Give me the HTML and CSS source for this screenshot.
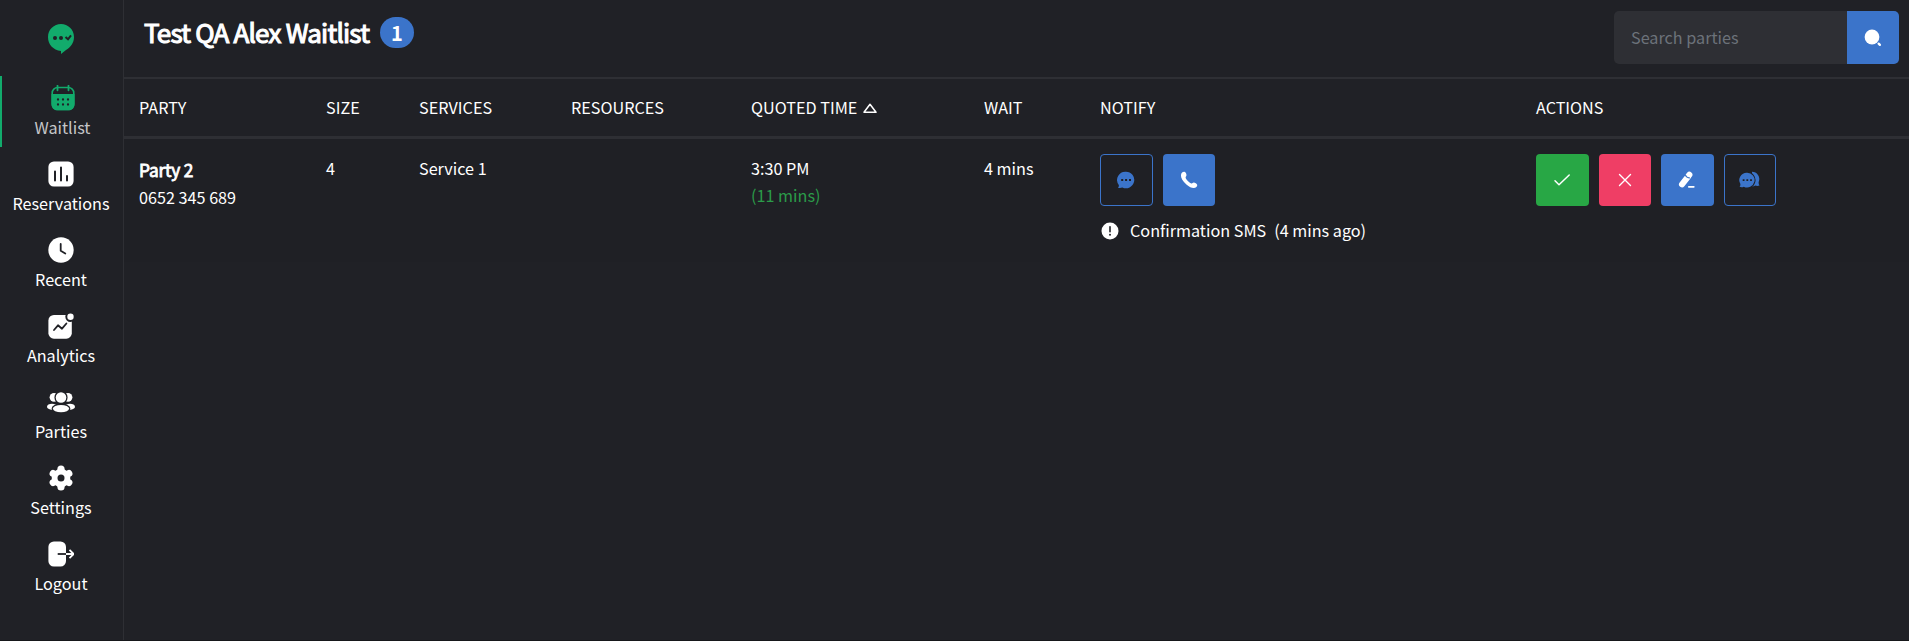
FILE: index.html
```html
<!DOCTYPE html>
<html lang="en">
<head>
<meta charset="utf-8">
<title>Waitlist</title>
<link rel="stylesheet" href="styles.css">
</head>
<body>
<div class="app">
  <nav class="sidebar">
    <a class="logo">
      <svg width="26" height="30" viewBox="0 0 26 30"><path fill="#12ab6c" d="M13 0C20 0 26 5.500 26 13C26 19 22.500 23.500 18 26L13 30V27C5 26 0 20.500 0 13C0 5.500 6 0 13 0Z"/><g fill="#202126"><circle cx="7" cy="14" r="2"/><circle cx="13" cy="14" r="2"/></g><path d="M17.500 13l2.500 2.300 3-4" fill="none" stroke="#202126" stroke-width="2"/></svg>
    </a>
    <a class="nav-item active">
      <svg class="nav-icon" width="26" height="26" viewBox="0 0 26 26"><rect x="2.200" y="2.500" width="21.600" height="22" rx="5.500" fill="none" stroke="#12ab6c" stroke-width="1.600"/><path fill="#12ab6c" d="M1.500 9h23v10c0 4-2.500 6.300-6 6.300h-11c-3.500 0-6-2.300-6-6.300z"/><path d="M7.500 .7v4.600M18.500 .7v4.600" stroke="#12ab6c" stroke-width="1.800" stroke-linecap="round"/><g fill="#202126"><circle cx="8" cy="14.500" r="1.150"/><circle cx="13" cy="14.500" r="1.150"/><circle cx="18" cy="14.500" r="1.150"/><circle cx="8" cy="19.500" r="1.150"/><circle cx="13" cy="19.500" r="1.150"/><circle cx="18" cy="19.500" r="1.150"/></g></svg>
      <span>Waitlist</span>
    </a>
    <a class="nav-item">
      <svg class="nav-icon" width="26" height="26" viewBox="0 0 26 26"><rect x=".4" y=".4" width="25.200" height="25.200" rx="5.500" fill="#fff"/><path d="M7 10.500v9M13 6.500v13M19 15v4.500" stroke="#202126" stroke-width="2" stroke-linecap="round"/></svg>
      <span>Reservations</span>
    </a>
    <a class="nav-item">
      <svg class="nav-icon" width="26" height="26" viewBox="0 0 26 26"><circle cx="13" cy="13" r="12.700" fill="#fff"/><path d="M12.700 7v6.800l4.600 2.700" fill="none" stroke="#202126" stroke-width="1.800" stroke-linecap="round" stroke-linejoin="round"/></svg>
      <span>Recent</span>
    </a>
    <a class="nav-item">
      <svg class="nav-icon" width="26" height="26" viewBox="0 0 26 26"><rect x=".4" y="2" width="23.400" height="23.700" rx="5.500" fill="#fff"/><circle cx="22.500" cy="3.700" r="5.200" fill="#202126"/><circle cx="22.500" cy="3.700" r="3.200" fill="#fff"/><path d="M6 17l4-4.700 4 3.400 4.400-5.200" fill="none" stroke="#202126" stroke-width="1.800" stroke-linecap="round" stroke-linejoin="round"/></svg>
      <span>Analytics</span>
    </a>
    <a class="nav-item">
      <svg class="nav-icon" width="28" height="26" viewBox="0 0 28 26"><g fill="#fff"><circle cx="7" cy="8.300" r="4.400"/><circle cx="21" cy="8.300" r="4.400"/><ellipse cx="5" cy="17.700" rx="5" ry="3"/><ellipse cx="23" cy="17.700" rx="5" ry="3"/></g><g fill="#fff" stroke="#202126" stroke-width="2.600" paint-order="stroke"><ellipse cx="14" cy="19.600" rx="8.100" ry="3.600"/><circle cx="14" cy="8.500" r="5.300"/></g></svg>
      <span>Parties</span>
    </a>
    <a class="nav-item">
      <svg class="nav-icon" width="26" height="26" viewBox="0 0 26 26"><g fill="#fff"><circle cx="13" cy="13" r="9.300"/><g stroke="#fff" stroke-width="7.200" stroke-linecap="round"><path d="M13 4V22M5.200 8.500l15.600 9M20.800 8.500l-15.600 9"/></g></g><circle cx="13" cy="13" r="3.500" fill="#202126"/></svg>
      <span>Settings</span>
    </a>
    <a class="nav-item">
      <svg class="nav-icon" width="26" height="26" viewBox="0 0 26 26"><rect x=".4" y=".4" width="17.600" height="25.200" rx="5.500" fill="#fff"/><path d="M9.700 13H18" stroke="#202126" stroke-width="1.800"/><path d="M18 13h7.500M21.500 8.800l4.200 4.200-4.200 4.200" fill="none" stroke="#fff" stroke-width="1.800" stroke-linejoin="round"/></svg>
      <span>Logout</span>
    </a>
  </nav>
  <main class="content">
    <header class="topbar">
      <h1 class="title">Test QA Alex Waitlist</h1>
      <span class="badge">1</span>
      <form class="search">
        <input class="search-input" type="text" placeholder="Search parties">
        <button class="search-button" type="button"><svg width="18" height="18" viewBox="0 0 18 18"><circle cx="8" cy="8" r="7.400" fill="#fff"/><path d="M14.600 14.600l1.300 1.300" stroke="#fff" stroke-width="2.300" stroke-linecap="round"/></svg></button>
      </form>
    </header>
    <div class="row head">
      <div>PARTY</div><div>SIZE</div><div>SERVICES</div><div>RESOURCES</div>
      <div class="sorted">QUOTED TIME <svg width="14" height="11" viewBox="0 0 14 11"><path d="M7 1.300L13 9.300H1z" fill="none" stroke="#fff" stroke-width="1.500" stroke-linejoin="round"/></svg></div>
      <div>WAIT</div><div>NOTIFY</div><div>ACTIONS</div>
    </div>
    <div class="row party">
      <div class="cell"><strong class="name">Party 2</strong><div class="phone">0652 345 689</div></div>
      <div class="cell">4</div>
      <div class="cell">Service 1</div>
      <div class="cell"></div>
      <div class="cell"><div>3:30 PM</div><div class="quoted">(11 mins)</div></div>
      <div class="cell">4 mins</div>
      <div>
        <div class="buttons">
          <button class="btn outline"><svg width="18" height="18" viewBox="0 0 18 18"><path fill="#3b74ca" d="M9 .7a8.300 8.300 0 1 1-3.600 15.800C4 17 2.500 17.100 1 16.700c.8-.8 1-1.800.8-2.700A8.300 8.300 0 0 1 9 .7z"/><path d="M4.200 8h2v2h-2zM8.100 8h2v2h-2zM12 8h2v2h-2z" fill="#1f2025"/></svg></button>
          <button class="btn blue"><svg width="18" height="18" viewBox="0 0 18 18"><path fill="#fff" d="M2.100 1.600C3.500.2 5.200.5 6 2.200C6.700 3.700 6.600 4.700 5.800 5.800C5.200 6.700 6.100 8.100 7.900 10C9.700 11.900 11.300 12.800 12.200 12.200C13.300 11.400 14.300 11.400 15.800 12.200C17.500 13.100 17.700 14.600 16.400 15.900C14.700 17.800 10.800 17.500 6.400 13.500C1 8.500-.3 3.900 2.100 1.600Z"/></svg></button>
        </div>
        <div class="notice"><svg width="18" height="18" viewBox="0 0 18 18"><circle cx="9" cy="9" r="8.500" fill="#fff"/><path d="M9 4.800v5" stroke="#1f2025" stroke-width="1.600" stroke-linecap="round"/><circle cx="9" cy="12.700" r="1" fill="#1f2025"/></svg><span class="notice-name">Confirmation SMS</span><span>(4 mins ago)</span></div>
      </div>
      <div class="buttons">
        <button class="btn green"><svg width="18" height="18" viewBox="0 0 18 18"><path d="M2 9.800l4 4L16.200 4" fill="none" stroke="#fff" stroke-width="1.500" stroke-linecap="round" stroke-linejoin="round"/></svg></button>
        <button class="btn red"><svg width="18" height="18" viewBox="0 0 18 18"><path d="M3.500 3.500l11 11M14.500 3.500l-11 11" stroke="#fff" stroke-width="1.400" stroke-linecap="round"/></svg></button>
        <button class="btn blue"><svg width="18" height="18" viewBox="0 0 18 18"><path d="M4 13.300l5.700-7.200" stroke="#fff" stroke-width="6" stroke-linecap="round"/><path d="M10.800 4.500l.6-.7" stroke="#fff" stroke-width="6" stroke-linecap="round"/><path d="M7.300 3.900c.6 1.800 2.400 3 4.700 3.100" fill="none" stroke="#3b74ca" stroke-width="1.200"/><path d="M10.800 15.800h5" stroke="#fff" stroke-width="1.700" stroke-linecap="round"/></svg></button>
        <button class="btn outline"><svg width="21" height="18" viewBox="0 0 21 18"><path fill="#3b74ca" d="M13 .8a7.200 7.200 0 0 1 6.800 9.800c-.4 1.500-.2 2.700.7 3.900-1.600.6-2.800.6-4 .1-1.200.7-2.300.9-3.500.9z"/><path fill="#3b74ca" stroke="#1f2025" stroke-width="2" paint-order="stroke" d="M8.200 1.700a7.400 7.400 0 1 1-3.400 14c-1.500.7-2.800.7-4.200.1.800-1 .9-2 .7-3A7.400 7.400 0 0 1 8.200 1.700z"/><path d="M3.700 8.300h1.800v1.800H3.700zM7.400 8.300h1.800v1.800H7.400zM11.100 8.300h1.800v1.800h-1.800z" fill="#1f2025"/></svg></button>
      </div>
    </div>
  </main>
</div>
</body>
</html>
```
FILE: styles.css
```css
* { box-sizing: border-box; }
body {
  margin: 0;
  background: #202126;
  color: #fff;
  font: 16.200px/27px "Noto Sans CJK SC", "Open Sans", sans-serif;
}
.app { display: flex; height: 641px; border-bottom: 1px solid #16171a; }
.sidebar {
  width: 124px;
  flex: none;
  display: flex;
  flex-direction: column;
  border-right: 1px solid #2e2f34;
}
.logo { height: 76px; display: flex; justify-content: center; padding: 24px 1px 0 0; }
.nav-item {
  height: 71px;
  margin-bottom: 5px;
  padding: 9px 1px 0 0;
  display: flex;
  flex-direction: column;
  align-items: center;
}
.nav-item span { margin-top: 3px; white-space: nowrap; }
.nav-item svg { flex: none; }
.active { border-left: 2px solid #12ab6c; padding-right: 0; color: #c5c6c8; }
.content { flex: 1; min-width: 0; }
.topbar {
  height: 79px;
  padding: 11px 10px 0 20px;
  display: flex;
  align-items: flex-start;
  border-bottom: 2px solid #2e2f34;
}
.title {
  width: 226px;
  margin: 2px 0 0;
  font-size: 26px;
  line-height: 38px;
  font-weight: 400;
  letter-spacing: -.8px;
  -webkit-text-stroke: 1.100px #fff;
  white-space: nowrap;
}
.badge {
  margin: 6px 0 0 10px;
  width: 34px;
  height: 31px;
  border-radius: 16px;
  background: #3b74ca;
  font-size: 20px;
  line-height: 31px;
  font-weight: 700;
  text-align: center;
}
.search { margin-left: auto; display: flex; width: 285px; height: 53px; border-radius: 5px; overflow: hidden; }
.search-input {
  flex: 1;
  min-width: 0;
  padding: 0 17px;
  border: 0;
  background: #2e2f34;
  color: #fff;
  font: inherit;
}
.search-input::placeholder { color: #6c727a; opacity: 1; }
.search-button { width: 52px; padding: 0; border: 0; background: #3b74ca; display: flex; align-items: center; justify-content: center; }
.row { display: grid; grid-template-columns: 187px 93px 152px 180px 233px 116px 436px 1fr; padding-left: 15px; }
.head { height: 60px; padding-top: 15px; border-bottom: 3px solid #2e2f34; }
.sorted svg { margin-left: 2px; }
.party { height: 123px; padding-top: 15px; background: #1f2025; }
.cell { padding-top: 1px; }
.name {
  display: block;
  padding-top: 1px;
  font-size: 17.300px;
  line-height: 27px;
  font-weight: 400;
  letter-spacing: -.2px;
  -webkit-text-stroke: .8px #fff;
}
.phone { padding-top: 1px; }
.quoted { color: #2b9b49; }
.buttons { display: flex; gap: 10px; }
.btn {
  width: 52.500px;
  height: 52px;
  padding: 0;
  border: 0;
  border-radius: 4px;
  display: flex;
  align-items: center;
  justify-content: center;
}
.outline { background: transparent; border: 1px solid #3b74ca; }
.blue { background: #3b74ca; }
.green { background: #28a745; }
.red { background: #ef3e65; }
.notice { display: flex; align-items: center; margin-top: 11px; padding-left: 1px; white-space: nowrap; }
.notice-name { margin: 0 8px 0 11px; }
```
